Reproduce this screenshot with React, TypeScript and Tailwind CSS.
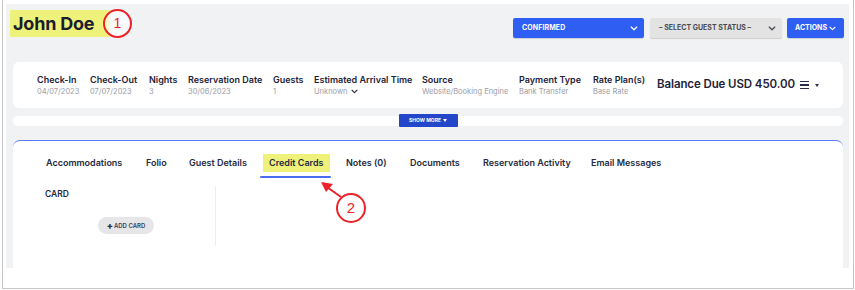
import React from "react";

const FONT = { fontFamily: "Inter, 'Noto Sans', sans-serif" };

function Chevron({ className = "" }: { className?: string }) {
  return (
    <svg viewBox="0 0 10 6" className={className} fill="none" stroke="currentColor" strokeWidth="1.6" strokeLinecap="round" strokeLinejoin="round">
      <path d="M1.5 1.2 L5 4.6 L8.5 1.2" />
    </svg>
  );
}

const cols: { label: string; value: React.ReactNode; w: string }[] = [
  { label: "Check-In", value: "04/07/2023", w: "w-[53px]" },
  { label: "Check-Out", value: "07/07/2023", w: "w-[59px]" },
  { label: "Nights", value: "3", w: "w-[39px]" },
  { label: "Reservation Date", value: "30/06/2023", w: "w-[85px]" },
  { label: "Guests", value: "1", w: "w-[41px]" },
  {
    label: "Estimated Arrival Time",
    value: (
      <span className="flex items-center gap-[3px]">
        Unknown
        <Chevron className="w-[7px] h-[5px] text-[#2a2f45]" />
      </span>
    ),
    w: "w-[108px]",
  },
  { label: "Source", value: "Website/Booking Engine", w: "w-[97px]" },
  { label: "Payment Type", value: "Bank Transfer", w: "w-[74px]" },
  { label: "Rate Plan(s)", value: "Base Rate", w: "w-[64px]" },
];

const tabs: { label: string; w: string; active?: boolean }[] = [
  { label: "Accommodations", w: "w-[100px]" },
  { label: "Folio", w: "w-[43px]" },
  { label: "Guest Details", w: "w-[80px]" },
  { label: "Credit Cards", w: "w-[77px]", active: true },
  { label: "Notes (0)", w: "w-[64px]" },
  { label: "Documents", w: "w-[73px]" },
  { label: "Reservation Activity", w: "w-[108px]" },
  { label: "Email Messages", w: "w-[90px]" },
];

export default function App() {
  return (
    <div className="relative w-[855px] h-[290px] bg-white overflow-hidden" style={FONT}>
      <div className="ml-[2px] w-[852px] h-[289px] border-l border-r border-b border-[#c6c6c6] pl-[3px] pr-[4px] pt-[4px]">
        <div className="w-[843px] h-[264px] bg-[#f1f2f4] flex flex-col">
          {/* Header */}
          <div className="h-[58px] flex justify-between items-start shrink-0">
            <div className="ml-[4px] mt-[6px] h-[27px] w-[100px] bg-[#eff27a] pl-[3px] flex items-center">
              <span className="text-[18px] font-bold text-[#1b1d2b] tracking-[-0.2px]">John Doe</span>
            </div>
            <div className="mt-[14px] mr-[5px] flex">
              <div className="w-[131px] h-[20px] bg-[#2f5ef2] rounded-[2px] flex items-center justify-between pl-[9px] pr-[6px] text-white shadow-[0_1px_1px_rgba(0,0,0,0.15)]">
                <span className="text-[7px] font-bold tracking-[0.1px]">CONFIRMED</span>
                <Chevron className="w-[8px] h-[5px]" />
              </div>
              <div className="ml-[6px] w-[132px] h-[20px] bg-[#e3e3e3] rounded-[2px] flex items-center justify-between pl-[9px] pr-[6px] text-[#4a4a52] shadow-[0_1px_1px_rgba(0,0,0,0.15)]">
                <span className="text-[7px] font-bold">– SELECT GUEST STATUS –</span>
                <Chevron className="w-[8px] h-[5px]" />
              </div>
              <div className="ml-[5px] w-[57px] h-[20px] bg-[#2f5ef2] rounded-[2px] flex items-center justify-center gap-[2px] text-white shadow-[0_1px_1px_rgba(0,0,0,0.15)]">
                <span className="text-[7px] font-bold">ACTIONS</span>
                <Chevron className="w-[7px] h-[5px]" />
              </div>
            </div>
          </div>

          {/* Summary card */}
          <div className="ml-[7px] mr-[6px] h-[46px] bg-white rounded-[6px] flex items-center pl-[24px] shrink-0">
            {cols.map((c) => (
              <div key={c.label} className={`${c.w} flex flex-col`}>
                <span className="text-[9px] leading-[12px] font-semibold text-[#1e2238] whitespace-nowrap">{c.label}</span>
                <span className="text-[7.5px] leading-[11px] text-[#9b9ca6] whitespace-nowrap">{c.value}</span>
              </div>
            ))}
            <span className="text-[11.5px] font-semibold text-[#1e2238] whitespace-nowrap tracking-[-0.1px]">Balance Due USD 450.00</span>
            <div className="ml-[5px] flex items-center gap-[6px]">
              <div className="flex flex-col gap-[2px]">
                <div className="w-[9px] h-[1.5px] bg-[#2a2f45]" />
                <div className="w-[9px] h-[1.5px] bg-[#2a2f45]" />
                <div className="w-[9px] h-[1.5px] bg-[#2a2f45]" />
              </div>
              <div className="w-0 h-0 border-l-[2px] border-r-[2px] border-t-[3px] border-l-transparent border-r-transparent border-t-[#2a2f45]" />
            </div>
          </div>

          {/* Show more bar */}
          <div className="mt-[8px] ml-[7px] mr-[6px] h-[10px] bg-white rounded-full flex items-center justify-center shrink-0">
            <div className="w-[59px] h-[13px] bg-[#2447c9] rounded-[1px] flex items-center justify-center gap-[2px] text-white -mt-[1px]">
              <span className="text-[5px] font-bold">SHOW MORE</span>
              <div className="w-0 h-0 border-l-[2.5px] border-r-[2.5px] border-t-[3px] border-l-transparent border-r-transparent border-t-white" />
            </div>
          </div>

          {/* Tabs card */}
          <div className="mt-[14px] ml-[7px] mr-[6px] flex-1 bg-white border-t border-[#5b7cf4] rounded-t-[7px]">
            <div className="pl-[24px] pt-[13px] flex">
              {tabs.map((t) => (
                <div key={t.label} className={`${t.w} flex flex-col`}>
                  <div className="h-[22px] flex items-start">
                    <span
                      className={`h-[18px] flex items-center text-[9px] font-semibold text-[#262a3f] whitespace-nowrap ${
                        t.active ? "bg-[#eff27a] pl-[6px] pr-[7px] ml-[3px]" : "pl-[9px]"
                      }`}
                    >
                      {t.label}
                    </span>
                  </div>
                  <div className={`h-[2px] w-[71px] rounded-full ${t.active ? "bg-[#4a6cf3]" : "bg-transparent"}`} />
                </div>
              ))}
            </div>
            <div className="mt-[8px] pl-[32px] flex">
              <div className="w-[171px] h-[60px] border-r border-[#eeeeee] flex flex-col">
                <span className="mt-[2px] text-[8.5px] leading-[12px] font-semibold text-[#262a3f]">CARD</span>
                <div className="mt-[17px] ml-[53px] w-[56px] h-[17px] rounded-full bg-[#e6e6e8] flex items-center justify-center gap-[1px]">
                  <span className="text-[9px] leading-none font-black text-[#2a2f45]">+</span>
                  <span className="text-[6px] font-semibold text-[#3a3f55]">ADD CARD</span>
                </div>
              </div>
            </div>
          </div>
        </div>
      </div>

      {/* Annotations */}
      <div className="absolute left-[103px] top-[9px] w-[29px] h-[29px] rounded-full border-2 border-[#ec2228] bg-white/60 flex items-center justify-center">
        <span className="text-[14px] text-[#ec2228]" style={{ fontFamily: "'Liberation Sans', sans-serif" }}>1</span>
      </div>
      <div className="absolute left-[336px] top-[193px] w-[30px] h-[30px] rounded-full border-2 border-[#ec2228] bg-white flex items-center justify-center">
        <span className="text-[15px] text-[#ec2228]" style={{ fontFamily: "'Liberation Sans', sans-serif" }}>2</span>
      </div>
      <svg className="absolute left-0 top-0 pointer-events-none" width="855" height="290">
        <line x1="341" y1="197" x2="327" y2="187" stroke="#ec2228" strokeWidth="2" />
        <polygon points="321,182 333,184 326,192" fill="#ec2228" />
      </svg>
    </div>
  );
}
